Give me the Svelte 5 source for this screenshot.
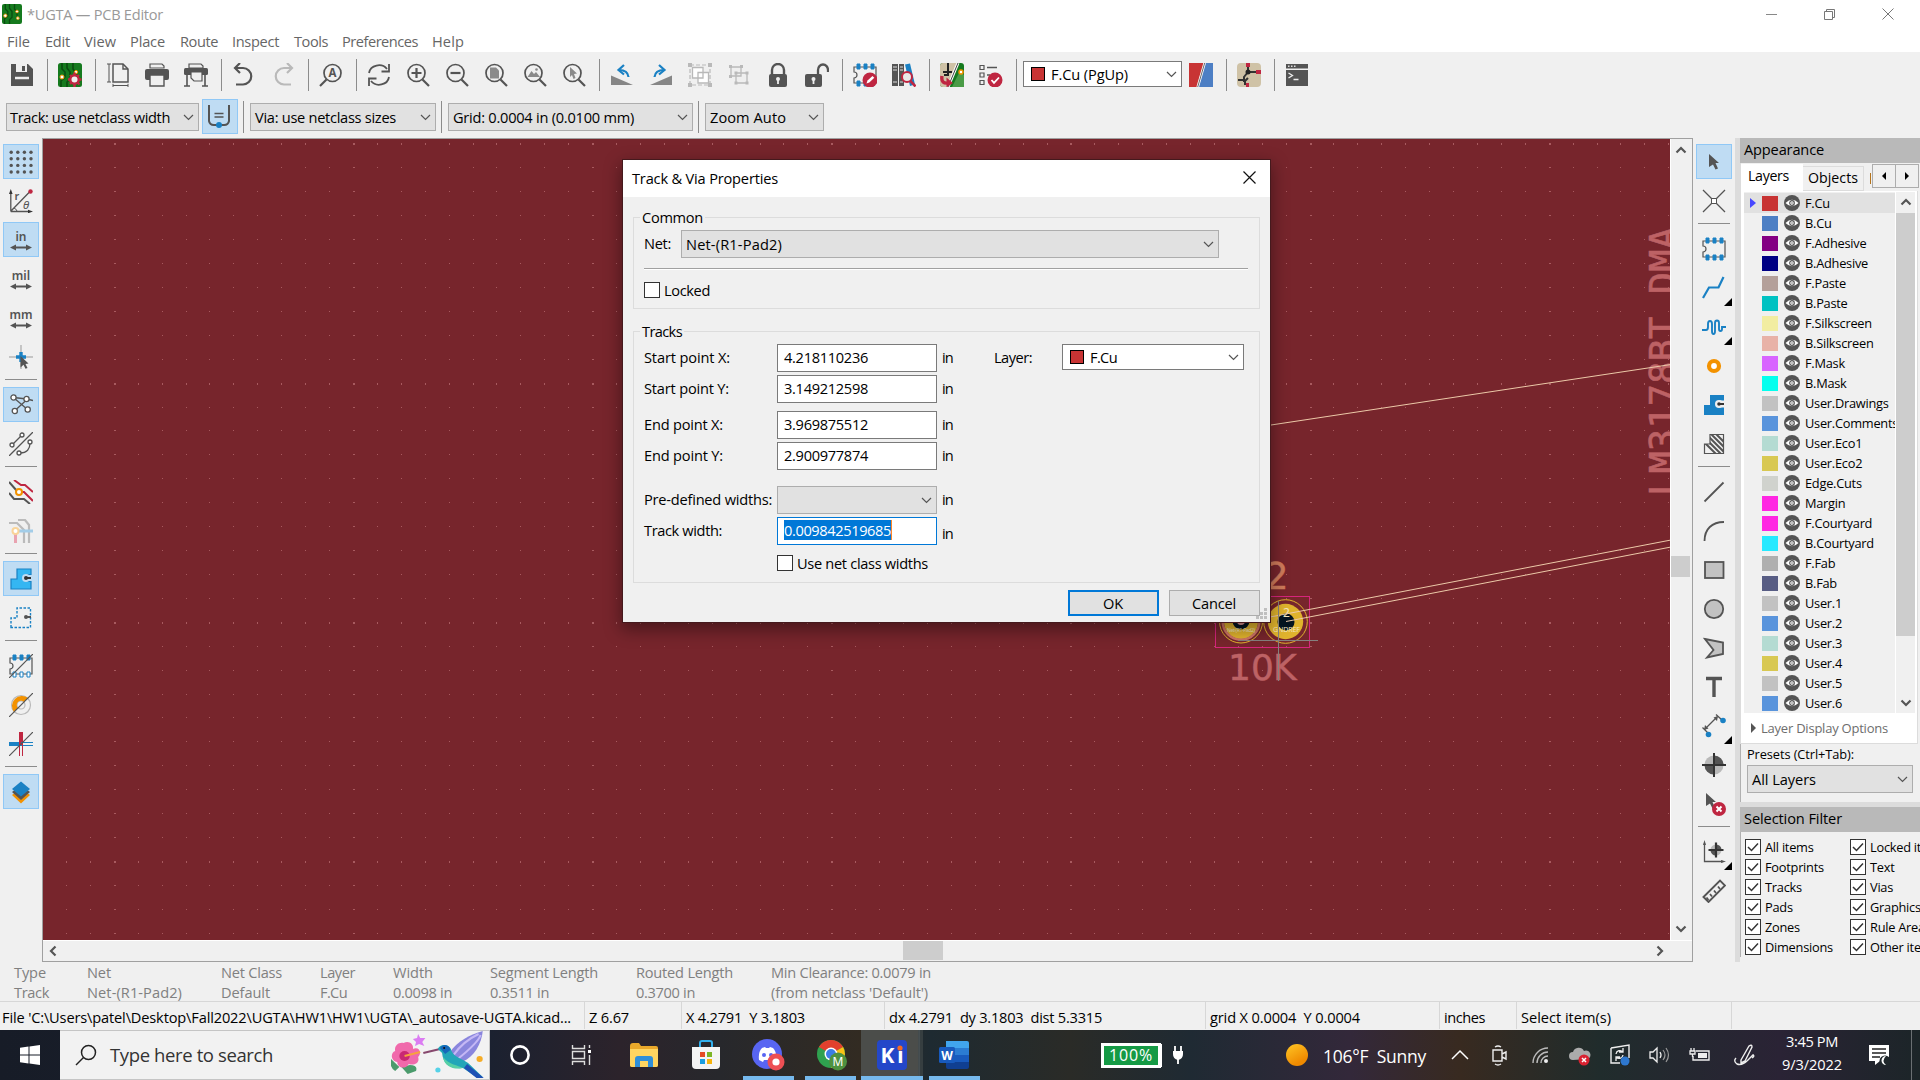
<script>
  // Spreads or tightens letters so that a label takes the given width in pixels.
  function fit(node, width) {
    if (!width) return;
    const natural = node.getBoundingClientRect().width;
    node.style.letterSpacing = (width - natural) / node.textContent.length + 'px';
  }

  const D = '#545454', B = '#1a81c4', R = '#bf2641', O = '#f39200', G = '#b9b9b9';
  const lens = (inner, c = D) => `<circle cx="10.5" cy="10" r="8.5" fill="none" stroke="${c}" stroke-width="1.7"/><path d="M16.5 16.5L23 23" stroke="${c}" stroke-width="2.2"/>${inner}`;
  const board = '<rect x="0" y="0" width="24" height="24" rx="2.5" fill="#157a1e"/><path d="M4 0v6l3 3v5l-4 4v6M9 0v5l3 4v7l-3 3v5M15 0v6l3 4v4" fill="none" stroke="#0a4d10" stroke-width="1.6"/>';
  const chip = (fill) => `<path d="M1 4H23V20H1V15a3 3 0 000-6z" fill="none" stroke="${D}" stroke-width="1.2"/><g fill="${B}" stroke="${B}"><path d="M4 1h3v5H4zM11 1h3v5h-3zM18 1h3v5h-3z"/><path fill="${fill}" d="M4 18h3v5H4zM11 18h3v5h-3zM18 18h3v5h-3z"/></g>`;
  const unit = '<path d="M4 19.5H20" stroke="#545454" stroke-width="2"/><path d="M1 19.5l6-3v6zM23 19.5l-6-3v6z" fill="#545454"/>';
  const word = (s, x = 12) => `<text x="${x}" y="12.6" text-anchor="middle" font-family="Noto Sans" font-weight="600" font-size="12" fill="${D}">${s}</text>`;
  const zone = (fill, extra) => `<path d="M2 22V12H8V2H22V7.5H18a3.5 3.5 0 000 7H22V22z" fill="${fill}" ${extra}/>`;
  const cursor = (x, y) => `<path transform="translate(${x} ${y})" d="M0 0L10 9H6.5L9 14.5 6.5 15.5 4 10.5 0 13z" fill="${D}"/>`;

  const icons = {
    save: `<path d="M1 1H18L23 6V23H1z" fill="${D}"/><path d="M6 1H17V9H6z" fill="#efefef"/><path d="M12 3h3v5h-3z" fill="${D}"/><path d="M5 15H19" stroke="#efefef" stroke-width="2.500"/>`,
    setup: `${board}<circle cx="4" cy="14" r="2" fill="#fff" stroke="${O}"/><circle cx="18" cy="9" r="1.6" fill="#fff" stroke="${O}"/><circle cx="16.5" cy="16.5" r="4.2" fill="#efefef" stroke="${R}" stroke-width="2.4"/><path d="M16.500 9.500V12M16.500 21v3M10 16.500h2.400M20.800 16.500H23.500M12 12l2 2M19.500 19.500l2 2M21 12l-2 2M12 21l2-2" stroke="${R}" stroke-width="2.400"/>`,
    page: `<path d="M7 1H17L22 6V19H7z" fill="none" stroke="${D}" stroke-width="1.5"/><path d="M17 1V6H22" fill="none" stroke="${D}" stroke-width="1.4"/><path d="M3 1V19M1 1H5M1 19H5M7 22.5H22M7 20.8V24M22 20.8V24" stroke="${D}"/>`,
    print: `<path d="M5 1H17L19 3V5H5z" fill="#efefef" stroke="${D}" stroke-width="1.2"/><rect x="0" y="6" width="24" height="11" rx="2" fill="${D}"/><path d="M5 12H19V23H5z" fill="#efefef" stroke="${D}" stroke-width="1.4"/>`,
    plot: `<path d="M5 1H17L19 3V5H5z" fill="#efefef" stroke="${D}" stroke-width="1.2"/><rect x="0" y="5" width="24" height="7" rx="1.5" fill="${D}"/><path d="M3 12V23M21 12V23M0 23H6M18 23H24" stroke="${D}" stroke-width="1.6"/><path d="M7 9H18V18H10L7 15z" fill="#efefef" stroke="${D}" stroke-width="1.2"/>`,
    undo: `<path d="M4 5H11A8 8 0 1111 21.5H4" fill="none" stroke="${D}" stroke-width="2.2"/><path d="M8 0L3 5 8 10" fill="none" stroke="${D}" stroke-width="2.2"/>`,
    redo: `<path d="M21 5H13A8 8 0 1013 21.5H20" fill="none" stroke="${G}" stroke-width="2.2"/><path d="M16 0L21 5 16 10" fill="none" stroke="${G}" stroke-width="2.2"/>`,
    find: `<g transform="translate(24 0) scale(-1 1)">${lens('')}</g><text x="13.5" y="14" text-anchor="middle" font-family="Noto Sans" font-weight="700" font-size="11.5" fill="${D}">A</text>`,
    refresh: `<path d="M2 10A10 9 0 0120 6M22 14A10 9 0 014 18" fill="none" stroke="${D}" stroke-width="1.8"/><path d="M22 1V8.500H14.500M2 23V15.500H9.500" fill="none" stroke="${D}" stroke-width="1.8"/>`,
    zoomin: lens(`<path d="M5.500 10h10M10.500 5v10" stroke="${D}" stroke-width="2.200"/>`),
    zoomout: lens(`<path d="M5.500 10h10" stroke="${D}" stroke-width="2.200"/>`),
    zoomfit: lens(`<path d="M6 4.500h6l3 3v8H6z" fill="#8a8a8a"/>`),
    zoomobj: lens(`<path d="M4.500 14l4-6 2.500 3 2-2 4 5z" fill="#8a8a8a"/><circle cx="13.500" cy="6.500" r="1.300" fill="#8a8a8a"/>`),
    zoomsel: lens(`<path d="M8 4l7 6.500-3 .5 1.500 4-2 1-1.500-4-2 2z" fill="#8a8a8a"/>`),
    rotl: `<path d="M1 22V12.500L23 22z" fill="#868686"/><path d="M9 7c5 0 9 2 9.500 7" fill="none" stroke="${B}" stroke-width="2.200"/><path d="M14 2L8.500 7 14 11.500" fill="none" stroke="${B}" stroke-width="2.200"/>`,
    rotr: `<path d="M23 22V12.500L1 22z" fill="#868686"/><path d="M15 7c-5 0-9 2-9.500 7" fill="none" stroke="${B}" stroke-width="2.200"/><path d="M10 2l5.500 5L10 11.500" fill="none" stroke="${B}" stroke-width="2.200"/>`,
    group: `<path d="M2 2H22V22H2z" fill="none" stroke="${G}" stroke-width="1.200" stroke-dasharray="4 2"/><path d="M0 0h4v4H0zM20 0h4v4h-4zM0 20h4v4H0zM20 20h4v4h-4z" fill="${G}"/><path d="M4.500 4.500H15V15H4.500zM10 9.500H20.500V20H10z" fill="#fff" stroke="${G}" stroke-width="1.300"/>`,
    ungroup: `<path d="M4 4H14V13H4zM9 10H20V20H9z" fill="#efefef" stroke="${G}" stroke-width="1.300"/><path d="M2 2h3v3H2zM13 2h3v3h-3zM2 12h3v3H2zM7.500 8.500h3v3h-3zM18.500 8.500h3v3h-3zM7.500 18.500h3v3h-3zM18.500 18.500h3v3h-3z" fill="${G}"/>`,
    lock: `<path d="M6 12V7a6 6 0 0112 0v5" fill="none" stroke="${D}" stroke-width="2.400"/><rect x="3" y="11" width="18" height="13" rx="2" fill="${D}"/><circle cx="12" cy="16" r="2" fill="#efefef"/><path d="M12 16v5" stroke="#efefef" stroke-width="1.800"/>`,
    unlock: `<path d="M13 12V7a5 5.500 0 0110 0v2" fill="none" stroke="${D}" stroke-width="2.300"/><rect x="0" y="11" width="17" height="13" rx="2" fill="${D}"/><circle cx="8.500" cy="16" r="2" fill="#efefef"/><path d="M8.500 16v5" stroke="#efefef" stroke-width="1.800"/>`,
    fpedit: `${chip(B)}<circle cx="17" cy="17" r="7.500" fill="${R}"/><path d="M13.500 20.500l1-3 5-4.500 1.800 1.800-5 4.700z" fill="#fff"/>`,
    library: `<path d="M0 1h6v22H0zM7 1h5v22H7z" fill="${D}"/><path d="M13 1.500l5-1 5 21-5 1.500z" fill="${B}"/><path d="M1 4h4M1 7h4M8 4h3M8 7h3M1 19h4M8 19h3" stroke="#ddd"/><circle cx="15" cy="14" r="5" fill="#e8e8e8" stroke="${R}" stroke-width="2"/><path d="M18.500 18l5 5.500" stroke="${R}" stroke-width="2.600"/>`,
    update: `<rect width="24" height="24" rx="3" fill="#157a1e"/><path d="M12 24L20 8 24 12V24z" fill="#4a9b46"/><path d="M3 0H17L8 24H3a3 3 0 01-3-3V3a3 3 0 013-3z" fill="#cfc2a6"/><path d="M8 0v7M3 9h9M8 12H4M8 7v6" stroke="#222" stroke-width="2"/><path d="M18 0L8 24" stroke="#fff" stroke-width="3"/><path d="M18 0L8 24" stroke="#444"/><circle cx="21" cy="9" r="2" fill="#fff" stroke="${O}" stroke-width="1.500"/><path d="M2 13c-1 6 2 7.500 6 7" stroke="${R}" stroke-width="3.400" fill="none"/><path d="M6.500 14.500l6.500 5.500-6.500 4.500z" fill="${R}"/>`,
    drc: `<path d="M1 2.500h4v4H1zM1 10h4v4H1zM1 17.500h4v4H1z" fill="none" stroke="${D}" stroke-width="1.200"/><path d="M8 4.500h10M8 12h3" stroke="${D}" stroke-width="1.500"/><circle cx="16" cy="17" r="7.500" fill="${R}"/><path d="M12.500 17l2.500 2.800 5-5.300" fill="none" stroke="#fff" stroke-width="1.800"/>`,
    pair: `<path d="M0 0H15.500L8.500 24H0z" fill="#c83434"/><path d="M16 0H24V24H9z" fill="#4d7fc4"/><path d="M15.700 0L8.700 24" stroke="#fff" stroke-width="2.600"/><path d="M15.700 0L8.700 24" stroke="#444" stroke-width=".8"/>`,
    router: `<rect width="24" height="24" rx="4" fill="#cfc2a6"/><path d="M11 3v6l-4 5v5M11 9h9M7 17H1M11 15l-3 3v4" stroke="#333" stroke-width="2" fill="none"/><path d="M9 0h4v4H9zM19 7h5v4h-5zM9 20h3v4H9z" fill="${R}"/><circle cx="11" cy="9" r="2.500" fill="#222"/>`,
    console: `<path d="M1 1H23V5.500H1zM1 7H23V23H1z" fill="${D}"/><path d="M3 3.200h1.500M6 3.200h1.500M9 3.200h1.500" stroke="#ddd" stroke-width="1.500"/><path d="M3.500 10l4 2.500-4 2.500M8.500 16.500h5" stroke="#eee" stroke-width="1.300" fill="none"/>`,
    via: `<path d="M2 1V17a5 5 0 005 4H17a5 5 0 005-4V1" fill="none" stroke="${D}" stroke-width="2"/><path d="M7.500 9.500h9M7.500 13h9" stroke="${D}" stroke-width="1.400"/><circle cx="12" cy="21" r="3" fill="${B}"/>`,
    grid: `<g fill="${D}">${[2.2, 8.800, 15.400, 22].map((y) => [2.200, 8.800, 15.400, 22].map((x) => `<circle cx="${x}" cy="${y}" r="1.700"/>`).join('')).join('')}</g>`,
    polar: `<path d="M1.800 22.500V3M1.800 22.500H20M2 22L21 2.500" fill="none" stroke="${D}" stroke-width="1.300"/><path d="M1.800 0L0 5h3.600zM24 22.500l-5-1.800v3.600z" fill="#333"/><circle cx="21.500" cy="2.500" r="2.200" fill="${R}"/><path d="M5 19a5 5 0 013 3" fill="none" stroke="${D}"/><text x="5.500" y="10.500" font-family="Noto Sans" font-size="11" font-weight="600" fill="${D}">r</text><text x="14" y="19.500" font-family="Noto Sans" font-size="11.500" font-style="italic" fill="${D}">θ</text>`,
    inch: word('in') + unit,
    mil: word('mil') + unit,
    mm: word('mm') + unit,
    cross: `<path d="M12 0V24M0 12H24" stroke="#999"/><path d="M12 7V17M7 12H17" stroke="${B}" stroke-width="3.400"/><path d="M11.500 11l8 7.500-3 .5 2 4-2 .8-2-4-3 2.700z" fill="${D}"/>`,
    rats: `<path d="M4.500 4.500L18 6l6 1.500M5.500 18L18 6.500M5 5L18.500 16.500" fill="none" stroke="${D}" stroke-width="1.300"/><g fill="#fff" stroke="${D}" stroke-width="1.300"><circle cx="4.500" cy="4.500" r="2.600"/><circle cx="17.500" cy="6" r="2.600"/><circle cx="5.800" cy="18" r="2.600"/><circle cx="18.700" cy="16.500" r="2.600"/></g>`,
    curved: `<path d="M0 24L24 0M4 12L12 4M11 21c7 0 10-4 10-10" fill="none" stroke="${D}" stroke-width="1.300"/><g fill="#fff" stroke="${D}" stroke-width="1.300"><circle cx="3" cy="13" r="2"/><circle cx="13" cy="3" r="2"/><circle cx="10" cy="21" r="2"/><circle cx="21" cy="10" r="2"/></g>`,
    tracks: `<g fill="none" stroke-width="2"><path d="M5 0l7 5h4l8 7M10 12h5l9 9" stroke="${R}"/><path d="M0 2l8 9M0 13l5 6h10l6 5" stroke="${D}"/></g><circle cx="10" cy="12" r="3" fill="#fff" stroke="${O}" stroke-width="2"/>`,
    nets: `<g fill="none" stroke-width="2.200"><path d="M0 4h8l7 7v13M9 1h7l4 5v18" stroke="#bbb"/><path d="M6 12h18" stroke="#a3cde8" stroke-width="3"/><path d="M6.500 12v12" stroke="#e9a3b0" stroke-width="3"/></g><circle cx="6.500" cy="12" r="3" fill="#fff" stroke="#f9d499" stroke-width="2"/>`,
    zone: `${zone('#34b6f2', `stroke="${B}" stroke-width="1.200"`)}<circle cx="17" cy="11" r="4" fill="#bfdcf3"/><path d="M16 11h6" stroke="#333" stroke-width="2"/><circle cx="17" cy="11" r="2" fill="#333"/>`,
    zoneout: `<path d="M2 21.500V12H8V2H21.500V21.500z" fill="none" stroke="${B}" stroke-width="1.400" stroke-dasharray="2.500 1.500"/><path d="M16 11h6" stroke="${D}" stroke-width="2"/><circle cx="17" cy="11" r="2" fill="${D}"/>`,
    fpout: `${chip('#fff')}<path d="M0 24L24 0" stroke="${D}" stroke-width="1.200"/>`,
    padout: `<circle cx="12" cy="12" r="9.500" fill="none" stroke="${G}" stroke-width="1.200"/><circle cx="12" cy="12" r="4" fill="none" stroke="${G}" stroke-width="1.200"/><path d="M5 19A10 10 0 0119 5L15 9a4.200 4.200 0 00-6 6z" fill="${O}"/><path d="M0 24L24 0" stroke="${D}" stroke-width="1.200"/>`,
    trkout: `<path d="M0 12h12" stroke="${B}" stroke-width="4"/><path d="M12 0v13" stroke="${R}" stroke-width="4"/><path d="M12 10.500h12M12 13.500h12" stroke="${B}"/><path d="M10.500 13v11M13.500 13v11" stroke="${R}"/><path d="M0 24L24 0" stroke="${D}" stroke-width="1.200"/>`,
    layers: `<path d="M12 8L21 15 12 23.500 3 15z" fill="${O}"/><path d="M12 5L21 12 12 20 3 12z" fill="${D}"/><path d="M12 1.500L21 9 12 16.500 3 9z" fill="${B}"/>`,
    select: cursor(7, 4),
    local: `<path d="M1 1L10 10M23 1L14 10M1 23L10 14M23 23L14 14" stroke="${D}" stroke-width="1.300"/><rect x="9.500" y="9.500" width="5" height="5" fill="#fff" stroke="${D}"/>`,
    chip: chip(B),
    route: `<path d="M1 22l6-10.500h9.500L21.500 1" fill="none" stroke="${B}" stroke-width="2.200"/>`,
    tune: `<path d="M0 15h4q2 0 2-3V9q0-3 2-3t2 3v7q0 3 1.500 3t1.500-3V8q0-2.500 2-2.500T17 8v6q0 2 1.500 2T20 14v-2h4" fill="none" stroke="${B}" stroke-width="1.900"/>`,
    viaring: `<circle cx="12" cy="12" r="5" fill="#fff" stroke="${O}" stroke-width="4.200"/>`,
    addzone: `${zone(B, '')}<circle cx="17" cy="11" r="4" fill="#efefef"/><path d="M16 11h6" stroke="#333" stroke-width="2"/><circle cx="17" cy="11" r="1.800" fill="#333"/>`,
    hatch: `<defs><clipPath id="hc"><path d="M2 22V12H8V2H22V22z"/></clipPath></defs><path clip-path="url(#hc)" d="M-8 0l24 24M-3 0l24 24M2 0l24 24M7 0l24 24M12 0l24 24" stroke="${D}" stroke-width="2"/><path d="M2.500 21.500V12H8V2.500H21.500V21.500z" fill="none" stroke="${D}" stroke-width="1.200"/>`,
    line: `<path d="M2.500 21.500L21.500 2.500" stroke="${D}" stroke-width="1.800"/>`,
    arc: `<path d="M2.500 22C2.500 10 10 3 22 3" fill="none" stroke="${D}" stroke-width="1.800"/>`,
    rect: `<rect x="3" y="4" width="18.500" height="16" fill="#c2c2c2" stroke="${D}" stroke-width="1.800"/>`,
    circle: `<circle cx="12" cy="12" r="9.200" fill="#c2c2c2" stroke="${D}" stroke-width="1.800"/>`,
    poly: `<path d="M3 3L21 6.500V18L5 21.500 11.500 14z" fill="#c2c2c2" stroke="${D}" stroke-width="1.800"/>`,
    text: `<path d="M4 3.500H20M12 3.500V22" stroke="${D}" stroke-width="3.400"/>`,
    dim: `<path d="M3 15L15 3M0.500 13.500L7 20M14 0.500L20 6" stroke="${D}" stroke-width="1.300"/><path d="M2 16l1-5 3.500 3.500zM16 2l-1 5-3.500-3.500z" fill="${D}"/><circle cx="6.500" cy="20.500" r="2.800" fill="${B}"/><circle cx="21" cy="6.500" r="2.800" fill="${B}"/>`,
    origin: `<circle cx="12" cy="12" r="9.500" fill="${G}"/><path d="M12 12V2.500A9.500 9.500 0 0121.500 12zM12 12V21.500A9.500 9.500 0 012.500 12z" fill="${D}"/><path d="M12 0V24M0 12H24" stroke="#333" stroke-width="2"/>`,
    del: `${cursor(4, 1)}<circle cx="17" cy="17" r="7" fill="${R}"/><path d="M14.500 14.500l5 5M19.500 14.500l-5 5" stroke="#fff" stroke-width="2"/>`,
    gridorigin: `<path d="M2.500 3V21.500H21" fill="none" stroke="${D}" stroke-width="1.300"/><path d="M2.500 0L1 5h3zM24 21.500l-5-1.500v3z" fill="${D}"/><circle cx="14" cy="10" r="5.500" fill="${G}"/><path d="M14 10V4.500a5.500 5.500 0 015.500 5.500zM14 10v5.500A5.500 5.500 0 018.500 10z" fill="${D}"/><path d="M14 2.500V17.500M6.500 10H21.500" stroke="#333" stroke-width="2.200"/>`,
    ruler: `<path d="M1.500 18L18 1.500l5 5L6.500 23z" fill="none" stroke="${D}" stroke-width="1.900"/><path d="M6.500 21l-2-2.500M10 17.500l-2-2.500M14 14l-2-2.500M18 10l-2-2.500" stroke="${D}" stroke-width="1.800"/>`
  };
  const boardIcon = board + `<circle cx="4" cy="14" r="2" fill="#fff" stroke="${O}"/><circle cx="18" cy="9" r="1.600" fill="#fff" stroke="${O}"/><circle cx="19" cy="17" r="1.600" fill="#fff" stroke="${O}"/>`;

  const toolbarA = ['save', '|', 'setup', '|', 'page', 'print', 'plot', '|', 'undo', 'redo', '|', 'find', '|', 'refresh', 'zoomin', 'zoomout', 'zoomfit', 'zoomobj', 'zoomsel', '|', 'rotl', 'rotr', 'group', 'ungroup', 'lock', 'unlock', '|', 'fpedit', 'library', '|', 'update', 'drc', '|'];
  const leftTools = ['grid*', 'polar', 'inch*', 'mil', 'mm', 'cross', '|', 'rats*', 'curved', '|', 'tracks', 'nets', '|', 'zone*', 'zoneout', '|', 'fpout', 'padout', 'trkout', '|', 'layers*'];
  const rightTools = ['select*', 'local', '|', 'chip', 'route+', 'tune+', 'viaring', 'addzone', 'hatch', '|', 'line', 'arc', 'rect', 'circle', 'poly', 'text', 'dim+', 'origin', 'del', '|', 'gridorigin+', 'ruler'];

  const menus = [['File', 23, 15], ['Edit', 25, 14], ['View', 32, 14], ['Place', 35, 15], ['Route', 38, 14], ['Inspect', 47, 15], ['Tools', 34, 14], ['Preferences', 76, 14], ['Help', 32, 0]];

  const layers = [['F.Cu', '#c83434'], ['B.Cu', '#4d7fc4'], ['F.Adhesive', '#840084'], ['B.Adhesive', '#000084'], ['F.Paste', '#b4a09a'], ['B.Paste', '#00c2c2'], ['F.Silkscreen', '#f2eda1'], ['B.Silkscreen', '#e8b2a7'], ['F.Mask', '#d864ff'], ['B.Mask', '#02ffee'], ['User.Drawings', '#c2c2c2'], ['User.Comments', '#5994dc'], ['User.Eco1', '#b4dbd2'], ['User.Eco2', '#d8c852'], ['Edge.Cuts', '#d0d2cd'], ['Margin', '#ff26e2'], ['F.Courtyard', '#ff26e2'], ['B.Courtyard', '#26e9ff'], ['F.Fab', '#afafaf'], ['B.Fab', '#585d84'], ['User.1', '#c2c2c2'], ['User.2', '#5994dc'], ['User.3', '#b4dbd2'], ['User.4', '#d8c852'], ['User.5', '#c2c2c2'], ['User.6', '#5994dc']];

  const filters = [['All items', 'Locked items'], ['Footprints', 'Text'], ['Tracks', 'Vias'], ['Pads', 'Graphics'], ['Zones', 'Rule Areas'], ['Dimensions', 'Other items']];

  const info = [['Type', 'Track', 73, 32, 35], ['Net', 'Net-(R1-Pad2)', 134, 24, 95], ['Net Class', 'Default', 99, 61, 49], ['Layer', 'F.Cu', 73, 35, 27], ['Width', '0.0098 in', 97, 40, 59], ['Segment Length', '0.3511 in', 146, 108, 59], ['Routed Length', '0.3700 in', 135, 97, 59], ['Min Clearance: 0.0079 in', "(from netclass 'Default')", 200, 160, 157]];

  const status = [["File 'C:\\Users\\patel\\Desktop\\Fall2022\\UGTA\\HW1\\HW1\\UGTA\\_autosave-UGTA.kicad...", 569, 585], ['Z 6.67', 40, 97], ['X 4.2791  Y 3.1803', 119, 203], ['dx 4.2791  dy 3.1803  dist 5.3315', 213, 321], ['grid X 0.0004  Y 0.0004', 150, 234], ['inches', 41, 77], ['Select item(s)', 90, 215]];

  // Grid dots; every tenth row and column is heavier.
  let dots = '';
  for (let r = 0; r < 34; r++)
    for (let c = 0; c < 68; c++) {
      const x = Math.round(66 + c * 23.915), y = Math.round(143.400 + r * 23.920);
      dots += `M${x} ${y}h${c % 10 === 2 ? 2 : 1}v${r % 10 === 0 ? 2 : 1}h-${c % 10 === 2 ? 2 : 1}z`;
    }
</script>

{#snippet t(s, w)}<span class="t" use:fit={w}>{s}</span>{/snippet}

{#snippet icon(name)}<svg width="24" height="24" viewBox="0 0 24 24">{@html icons[name]}</svg>{/snippet}

{#snippet chev()}<svg class="chev" width="11" height="7" viewBox="0 0 11 7"><path d="M1 1L5.5 5.500 10 1" fill="none" stroke="#555" stroke-width="1.200" /></svg>{/snippet}

{#snippet arrow(dir)}<svg class="arr {dir}" width="12" height="12" viewBox="0 0 12 12"><path d="M1.500 8.500L6 4l4.500 4.500" fill="none" stroke="#555" stroke-width="2.200" /></svg>{/snippet}

{#snippet tools(list)}
  {#each list as name}
    {#if name === '|'}
      <div class="sep"></div>
    {:else}
      <div class="tool" class:on={name.endsWith('*')}>
        {@render icon(name.replace(/[*+]/, ''))}
        {#if name.endsWith('+')}<i class="corner"></i>{/if}
      </div>
    {/if}
  {/each}
{/snippet}

{#snippet check(label, w)}
  <div class="check"><b class="box"><svg width="14" height="14" viewBox="0 0 14 14"><path d="M2 7l3.500 3.500L12 3.500" fill="none" stroke="#333" stroke-width="1.500" /></svg></b>{@render t(label, w)}</div>
{/snippet}

<div class="screen">
  <header>
    <div class="title">
      <svg width="20" height="20" viewBox="0 0 24 24">{@html boardIcon}</svg>
      {@render t('*UGTA — PCB Editor', 136)}
      <svg class="winbtns" width="130" height="20" viewBox="0 0 130 20"><path d="M1 10.500h11" stroke="#888" /><path d="M59.500 7.500h8v8h-8zM61.500 7.500v-2h8v8h-2" fill="none" stroke="#777" /><path d="M117.500 4.500l11 11M128.500 4.500l-11 11" stroke="#777" /></svg>
    </div>
    <nav>
      {#each menus as [m, w, gap]}
        <span class="menu g{gap}">{@render t(m, w)}</span>
      {/each}
    </nav>
  </header>

  <div class="bar bar1">
    {@render tools(toolbarA)}
    <div class="combo white layercombo"><i class="sw"></i>{@render t('F.Cu (PgUp)', 77)}{@render chev()}</div>
    {@render tools(['pair', '|', 'router', '|', 'console'])}
  </div>
  <div class="bar bar2">
    <div class="combo c1">{@render t('Track: use netclass width', 160)}{@render chev()}</div>
    <div class="viabtn">{@render icon('via')}</div>
    <div class="vsep"></div>
    <div class="combo c2">{@render t('Via: use netclass sizes', 141)}{@render chev()}</div>
    <div class="vsep"></div>
    <div class="combo c3">{@render t('Grid: 0.0004 in (0.0100 mm)', 181)}{@render chev()}</div>
    <div class="vsep"></div>
    <div class="combo c4">{@render t('Zoom Auto', 76)}{@render chev()}</div>
  </div>

  <main>
    <div class="vbar left">{@render tools(leftTools)}</div>
    <div class="work">
      <div class="view">
        <svg class="board" width="1628" height="801" viewBox="43 139 1628 801">
          <rect x="43" y="139" width="1628" height="801" fill="#77252c" />
          <path d={dots} fill="#a85a5f" shape-rendering="crispEdges" />
          <g class="silk">
            <text transform="translate(1676 496) rotate(-90)" font-size="37" textLength="269">LM3178BT DMA</text>
          </g>
          <g class="value"><text x="1228" y="680" font-size="36">1</text><text x="1251" y="680" font-size="36">0</text><text x="1273" y="680" font-size="36">K</text></g>
          <text class="ref" x="1265" y="589" font-size="37">2</text>
          <rect x="1215.500" y="596.500" width="94" height="51" fill="none" stroke="#d6257c" />
          <g fill="none" stroke="#e0b32d">
            <circle cx="1241" cy="621.500" r="21.500" /><circle cx="1285.500" cy="621.500" r="21.800" />
          </g>
          <circle cx="1241" cy="622" r="17" fill="#e0b32d" /><circle cx="1241" cy="621.500" r="18.300" fill="none" stroke="#cf7664" stroke-width="2.500" />
          <circle cx="1241" cy="621" r="8.500" fill="#041420" /><circle cx="1241" cy="621" r="4" fill="#dc9494" />
          <circle cx="1285.500" cy="621.500" r="17.700" fill="#e0b32d" /><circle cx="1286" cy="622" r="8.500" fill="#041420" />
          <g fill="#f3e6c0" font-family="Noto Sans" text-anchor="middle"><text x="1286.500" y="617" font-size="12">2</text><text x="1286.500" y="632" font-size="7" textLength="27">GNDREF</text><text x="1241" y="632" font-size="5" textLength="28">Net-(R1-Pad2)</text></g>
          <path d="M1271 425L1671 364.500M1270 617L1671 540M1286 621.500L1671 547" fill="none" stroke="#ecc9a8" stroke-width="1" />
          <path d="M1278.500 601V681M1238 640.500H1318" stroke="#85817f" />
        </svg>
        <div class="vscroll">{@render arrow('up')}<i></i>{@render arrow('down')}</div>
      </div>
      <div class="hscroll">{@render arrow('lt')}<i></i>{@render arrow('rt')}</div>
    </div>
    <div class="vbar right">{@render tools(rightTools)}</div>
    <aside>
      <div class="head">{@render t('Appearance', 80)}</div>
      <div class="tabs">
        <div class="tab active">{@render t('Layers', 41)}</div>
        <div class="tab">{@render t('Objects', 50)}</div>
        <div class="sliver"></div>
        <div class="tbtn"><svg width="6" height="8" viewBox="0 0 6 8"><path d="M5 0v8L1 4z" /></svg></div>
        <div class="tbtn"><svg width="6" height="8" viewBox="0 0 6 8"><path d="M1 0v8l4-4z" /></svg></div>
      </div>
      <div class="panel">
        <div class="lists">
          <div class="rows">
            {#each layers as [name, color], i}
              <div class="row" class:cur={i === 0}>
                <i class="mark"></i><b style="background:{color}"></b>
                <svg width="16" height="16" viewBox="0 0 16 16"><circle cx="8" cy="8" r="8" fill="#545454" /><path d="M1.500 8Q8 1.500 14.500 8 8 14.500 1.500 8z" fill="#fff" /><circle cx="8" cy="8" r="2.300" fill="#fff" stroke="#545454" stroke-width="1.200" /><circle cx="8" cy="8" r=".7" fill="#545454" /></svg>
                <span class="lname">{name}</span>
              </div>
            {/each}
          </div>
          <div class="lscroll">{@render arrow('up')}<i></i>{@render arrow('down')}</div>
        </div>
        <div class="ldo"><svg width="5" height="10" viewBox="0 0 5 10"><path d="M0 0l5 5-5 5z" fill="#555" /></svg>{@render t('Layer Display Options', 127)}</div>
      </div>
      <div class="presets">
        {@render t('Presets (Ctrl+Tab):', 107)}
        <div class="combo">{@render t('All Layers', 64)}{@render chev()}</div>
      </div>
      <div class="head sel">{@render t('Selection Filter', 98)}</div>
      <div class="filters">
        {#each filters as [a, b]}
          {@render check(a)}{@render check(b)}
        {/each}
      </div>
    </aside>
  </main>

  <section class="info">
    {#each info as [a, b, w, wa, wb]}
      <div style="width:{w}px">{@render t(a, wa)}{@render t(b, wb)}</div>
    {/each}
  </section>
  <section class="status">
    {#each status as [s, w, cell]}
      <div style="width:{cell}px">{@render t(s, w)}</div>
    {/each}
  </section>

  <footer>
    <div class="start"><svg width="20" height="20" viewBox="0 0 20 20"><path d="M0 2.800L8.500 1.600V9.500H0zM9.500 1.400L20 0V9.500H9.500zM0 10.500H8.500V18.400L0 17.200zM9.500 10.500H20V20L9.500 18.600z" fill="#fff" /></svg></div>
    <div class="search">
      <svg width="22" height="22" viewBox="0 0 22 22"><circle cx="13.500" cy="8.500" r="7" fill="none" stroke="#222" stroke-width="1.500" /><path d="M8.500 13.500L1 21" stroke="#222" stroke-width="1.500" /></svg>
      {@render t('Type here to search', 163)}
      <svg class="bird" width="98" height="48" viewBox="2 0 94 48" preserveAspectRatio="none">
        <path d="M6 40q-6-4-4-12l8 8zM20 34q8 0 6 6l-8 3-6-7z" fill="#4b9b6c" />
        <path d="M14 12c6-3 10 2 9 6 6-3 9 4 5 8 2 6-4 9-9 7-3 6-11 4-11-2-6-1-7-9-2-11-1-5 3-9 8-8z" fill="#f069ab" />
        <circle cx="15" cy="25" r="5" fill="#c92873" /><path d="M15 25l15-4" stroke="#f7a13d" stroke-width="2" />
        <path d="M28 3l2 4 5 0-3 4 2 4-5-2-4 2 1-4-3-3 4-1z" fill="#db7cf2" />
        <path d="M33 22l16-4" stroke="#87496e" stroke-width="2" />
        <path d="M58 22C66 9 78 4 90 0c-1 12-8 26-20 31z" fill="#8a86dd" /><path d="M66 28C78 18 86 10 88 4M62 24C70 12 80 6 86 3" stroke="#c5b8f5" stroke-width="2" fill="none" />
        <path d="M47 18c2-6 12-5 13 2 4 8 13 8 18 14l12 12-5 1-14-10c-13 1-19-4-20-15z" fill="#22a6b8" /><path d="M49 17c3-5 9-3 10 2l-5 4z" fill="#1668ba" /><path d="M52 26c6 8 14 8 19 11-8 2-18-1-19-11z" fill="#57d0a6" /><path d="M75 33l16 14-7 0-12-10z" fill="#1e50b4" />
        <circle cx="53" cy="17" r="1" fill="#111" /><circle cx="87" cy="28" r="3" fill="#f5ac26" /><circle cx="47" cy="39" r="2.500" fill="#56d2e8" />
      </svg>
    </div>
    <div class="app"><svg width="22" height="22" viewBox="0 0 22 22"><circle cx="11" cy="11" r="8.600" fill="none" stroke="#fff" stroke-width="2.600" /></svg></div>
    <div class="app"><svg width="22" height="22" viewBox="0 0 22 22"><path d="M1.500 1v3.500h12V1M1.500 21v-3.500h12V21M1.500 7.500h12v7h-12zM18.500 1v3M18.500 11v10" fill="none" stroke="#ddd" stroke-width="1.400" /><rect x="17" y="6" width="3" height="3" fill="#fff" /></svg></div>
    <div class="app"><svg width="30" height="26" viewBox="0 0 30 26"><path d="M1 4q0-3 3-3h6l2 3h15q2 0 2 2v17q0 2-2 2H3q-2 0-2-2z" fill="#e9a82a" /><path d="M1 7h28v16q0 2-2 2H3q-2 0-2-2z" fill="#ffd560" /><path d="M6 25V17q0-3 3-3h12q3 0 3 3v8h-5v-6h-8v6z" fill="#2f8fd8" /></svg></div>
    <div class="app"><svg width="30" height="30" viewBox="0 0 30 30"><path d="M9 8V3q0-2 2-2h8q2 0 2 2v5" fill="none" stroke="#31b0ee" stroke-width="2" /><path d="M1 7H29V25q0 4-4 4H5q-4 0-4-4z" fill="#f4f4f4" /><path d="M9 12h5v5H9z" fill="#e44b25" /><path d="M16 12h5v5h-5z" fill="#7cb526" /><path d="M9 19h5v5H9z" fill="#1a9de0" /><path d="M16 19h5v5h-5z" fill="#f7b40c" /></svg></div>
    <div class="app open"><svg width="34" height="34" viewBox="0 0 34 34"><circle cx="16" cy="16" r="15" fill="#5865f2" /><path d="M8 22q-1-8 3-12l3-1 1 1h3l1-1 3 1q4 4 3 12l-4 2-1-2h-7l-1 2z" fill="#fff" /><circle cx="13" cy="17" r="2" fill="#5865f2" /><circle cx="20" cy="17" r="2" fill="#5865f2" /><circle cx="25" cy="24" r="8.500" fill="#ed4f54" /><circle cx="25" cy="24" r="3.600" fill="#fff" /></svg></div>
    <div class="app open"><svg width="34" height="34" viewBox="-3 -1 34 34"><circle cx="15" cy="15" r="14" fill="#2fa14f" /><path d="M15 15L2.900 8A14 14 0 0127.100 8z" fill="#e2402e" /><path d="M15 15L27.100 8A14 14 0 0115 29z" fill="#fbc116" /><path d="M3 8A14 14 0 0127 8H15z" fill="#e2402e" /><circle cx="15" cy="15" r="6.500" fill="#fff" /><circle cx="15" cy="15" r="5" fill="#3c7de6" /><circle cx="22" cy="22.500" r="9" fill="#4f9140" /><text x="22" y="27" text-anchor="middle" font-family="Noto Sans" font-size="12" fill="#fff">M</text></svg></div>
    <div class="app open active"><svg width="30" height="30" viewBox="0 0 30 30"><rect x="0" y="0" width="30" height="30" rx="4" fill="#2447c9" /><text x="3.500" y="23" font-family="Noto Sans" font-weight="700" font-size="21" fill="#fff" textLength="23">Kı</text><circle cx="23" cy="8" r="2.600" fill="#f46a25" /></svg></div>
    <div class="app open word"><svg width="30" height="28" viewBox="0 0 30 28"><path d="M7 0H28q2 0 2 2V7H7z" fill="#41a5ee" /><path d="M7 7H30v7H7z" fill="#2b7cd3" /><path d="M7 14H30v7H7z" fill="#185abd" /><path d="M7 21H30v5q0 2-2 2H9q-2 0-2-2z" fill="#103f91" /><rect x="0" y="6" width="16" height="16" rx="1.500" fill="#185abd" /><text x="8" y="18.500" text-anchor="middle" font-family="Noto Sans" font-weight="700" font-size="12" fill="#fff">W</text></svg></div>
    <div class="battery">{@render t('100%', 44)}</div>
    <svg class="plug" width="12" height="20" viewBox="0 0 12 20"><path d="M3 1v5M9 1v5M6 14v5" stroke="#fff" stroke-width="1.800" /><path d="M1 6h10v3q0 5-5 6-5-1-5-6z" fill="#fff" /></svg>
    <div class="sun"></div>
    <div class="weather">{@render t('106°F  Sunny', 103)}</div>
    <div class="tray">
      <svg width="24" height="24" viewBox="0 0 24 24"><path d="M4 16l8-8 8 8" stroke="#fff" fill="none" stroke-width="1.500" /></svg>
      <svg width="24" height="24" viewBox="0 0 24 24"><path d="M5 7h9v11H5zM14 11l4-2v7l-4-2M7 4q3-2 6 0M7 21q3 2 6 0" stroke="#eee" fill="none" stroke-width="1.400" /></svg>
      <svg width="24" height="24" viewBox="0 0 24 24"><path d="M5 20A15 15 0 0120 5M9 20A11 11 0 0120 9M13 20a7 7 0 017-7" stroke="#bbb" fill="none" stroke-width="1.400" /><circle cx="18" cy="18" r="2" fill="#eee" /></svg>
      <svg width="24" height="24" viewBox="0 0 24 24"><path d="M5 17a4 4 0 010-8 6 6 0 0111-1 4 4 0 014 8z" fill="#ababab" /><circle cx="16" cy="17" r="5.500" fill="#d92231" /><path d="M14 15l4 4M18 15l-4 4" stroke="#fff" stroke-width="1.500" /></svg>
      <svg width="24" height="24" viewBox="0 0 24 24"><path d="M3 5l18-3v13M3 5v15h9" stroke="#eee" fill="none" stroke-width="1.400" /><path d="M8 11a4 4 0 017-2M15 12a4 4 0 01-7 2M15 5v4h-4M8 18v-4h4" stroke="#eee" fill="none" stroke-width="1.300" /><circle cx="17" cy="18" r="4.500" fill="#2e78cf" /></svg>
      <svg width="24" height="24" viewBox="0 0 24 24"><path d="M2 9h3l4-4v14l-4-4H2z" stroke="#eee" fill="none" stroke-width="1.300" /><path d="M12 9q2 3 0 6" stroke="#eee" fill="none" stroke-width="1.300" /><path d="M15 7q4 5 0 10M18 5q5 7 0 14" stroke="#999" fill="none" stroke-width="1.200" /></svg>
      <svg width="24" height="24" viewBox="0 0 24 24"><path d="M8 8h13v9H5v-4" stroke="#eee" fill="none" stroke-width="1.400" /><path d="M10 10h9v5h-9z" fill="#eee" /><path d="M3 5v3M6 5v3M2 8h5v3H2zM4.500 11v3" stroke="#eee" stroke-width="1.300" fill="none" /></svg>
    </div>
    <svg class="pen" width="24" height="24" viewBox="0 0 24 24"><path d="M8 17L16 3q3-2 3 1L12 18l-4 2zM3 15q-3 3 1 6 5 2 11-4t5-5q2 1-1 3" stroke="#eee" fill="none" stroke-width="1.400" /></svg>
    <div class="clock">{@render t('3:45 PM', 52)}{@render t('9/3/2022', 60)}</div>
    <svg class="note" width="24" height="24" viewBox="0 0 24 24"><path d="M2 2h20v16h-9l-5 4v-4H2z" fill="#fff" /><path d="M5 6h14M5 10h14M5 14h8" stroke="#222" stroke-width="1.500" /><circle cx="18" cy="18" r="5.500" fill="#1f272b" /><path d="M19 13q-5 5 0 9a4.500 4.500 0 010-9z" fill="#fff" /></svg>
    <div class="peek"></div>
  </footer>

  <div class="dialog">
    <div class="dtitle">{@render t('Track & Via Properties', 146)}<svg width="13" height="13" viewBox="0 0 13 13"><path d="M.5 .5l12 12M12.500 .5l-12 12" stroke="#111" stroke-width="1.200" /></svg></div>
    <fieldset class="common">
      <legend>{@render t('Common', 61)}</legend>
      <div class="frow net"><span class="netlabel">{@render t('Net:', 27)}</span><div class="combo">{@render t('Net-(R1-Pad2)', 96)}{@render chev()}</div></div>
      <div class="rule"></div>
      <div class="frow lockrow"><b class="cb"></b>{@render t('Locked', 46)}</div>
    </fieldset>
    <fieldset class="tracks">
      <legend>{@render t('Tracks', 40)}</legend>
      <div class="frow"><label for="sx">{@render t('Start point X:', 86)}</label><div id="sx" class="input">{@render t('4.218110236', 84)}</div><em>{@render t('in', 11)}</em>
        <span class="laylabel">{@render t('Layer:', 38)}</span><div class="combo white laycombo"><i class="sw"></i>{@render t('F.Cu', 27)}{@render chev()}</div></div>
      <div class="frow r2"><label for="sy">{@render t('Start point Y:', 85)}</label><div id="sy" class="input">{@render t('3.149212598', 84)}</div><em>{@render t('in', 11)}</em></div>
      <div class="frow r3"><label for="ex">{@render t('End point X:', 79)}</label><div id="ex" class="input">{@render t('3.969875512', 84)}</div><em>{@render t('in', 11)}</em></div>
      <div class="frow r2"><label for="ey">{@render t('End point Y:', 79)}</label><div id="ey" class="input">{@render t('2.900977874', 84)}</div><em>{@render t('in', 11)}</em></div>
      <div class="frow r5"><label for="pw">{@render t('Pre-defined widths:', 128)}</label><div id="pw" class="combo pw">{@render chev()}</div><em>{@render t('in', 11)}</em></div>
      <div class="frow r2"><label for="tw">{@render t('Track width:', 78)}</label><div id="tw" class="input focus"><mark>{@render t('0.009842519685', 107)}</mark></div><em class="low">{@render t('in', 11)}</em></div>
      <div class="frow r7"><b class="cb"></b>{@render t('Use net class widths', 131)}</div>
    </fieldset>
    <div class="buttons"><div class="btn ok">{@render t('OK', 20)}</div><div class="btn">{@render t('Cancel', 44)}</div></div>
    <svg class="grip" width="12" height="12" viewBox="0 0 12 12"><path d="M8 0h3v3H8zM4 4h3v3H4zM8 4h3v3H8zM0 8h3v3H0zM4 8h3v3H4zM8 8h3v3H8z" fill="#bfbfbf" /></svg>
  </div>
</div>

<style>
  :global(body) { margin: 0; overflow: hidden; }
  .screen { position: relative; width: 1920px; height: 1080px; overflow: hidden; background: #f0f0f0; font: 14.600px/20px 'Open Sans', 'Noto Sans', sans-serif; color: #000; display: flex; flex-direction: column; }
  .screen :global(svg) { display: block; flex: none; }
  .t { white-space: pre; flex: none; }
  i, em { font-style: normal; display: block; }
  b { display: block; font-weight: 400; }

  header { background: #fff; height: 52px; color: #666; }
  .title { display: flex; align-items: center; height: 28px; padding-left: 2px; gap: 5px; color: #999; }
  .winbtns { margin-left: auto; margin-right: 25px; }
  nav { display: flex; height: 24px; padding: 3px 0 0 7px; box-sizing: border-box; }
  .g15 { margin-right: 15px; }
  .g14 { margin-right: 14px; }

  .bar { display: flex; align-items: center; }
  .bar1 { height: 46px; padding-left: 2px; }
  .bar2 { height: 40px; padding-left: 6px; align-items: flex-start; padding-top: 5px; box-sizing: border-box; }
  .tool { display: flex; align-items: center; justify-content: center; flex: none; box-sizing: border-box; }
  .bar .tool { width: 39px; height: 39px; }
  .bar .sep { width: 1px; height: 32px; margin: 0 2px 0 6px; background: #8c8c8c; flex: none; }
  .combo { box-sizing: border-box; display: flex; align-items: center; height: 28px; border: 1px solid #adadad; background: #e1e1e1; padding: 0 4px; overflow: hidden; flex: none; }
  .combo.white { background: #fff; border-color: #7a7a7a; }
  .combo :global(.chev) { margin-left: auto; }
  .sw { width: 12px; height: 12px; border: 1px solid #000; background: #c83434; margin-right: 6px; flex: none; }
  .layercombo { width: 159px; height: 26px; margin: -2px -1px 0 4px; padding-left: 7px; }
  .c1 { width: 193px; padding-left: 3px; }
  .c2 { width: 186px; }
  .c3 { width: 245px; }
  .c4 { width: 119px; }
  .viabtn { width: 34px; height: 33px; margin: -4px 5px 0 3px; border: 1px solid #90c8f6; background: #bfdcf3; display: flex; align-items: center; justify-content: center; }
  .viabtn :global(svg) { margin: 0 2px 2px 0; }
  .vsep { width: 1px; height: 32px; margin: -2px 6px 0 5px; background: #8c8c8c; }
  .viabtn + .vsep { margin-left: 0; }

  main { display: flex; height: 824px; }
  .vbar { display: flex; flex-direction: column; align-items: center; padding-top: 6px; height: 818px; flex: none; }
  .vbar.left { width: 42px; }
  .vbar.right { width: 42px; }
  .vbar .tool { width: 36px; height: 35px; margin: 0 0 4px; position: relative; border: 1px solid transparent; }
  .vbar .tool.on { background: #bfdcf3; border-color: #90c8f6; }
  .vbar .sep { width: 32px; height: 1px; margin: 1px 0 7px; background: #8c8c8c; flex: none; }
  .corner { position: absolute; right: -1px; bottom: -2px; border: 4px solid #000; border-top-color: transparent; border-left-color: transparent; }
  .work { width: 1649px; border: 1px solid #a0a0a0; flex: none; height: 822px; }
  .view { display: flex; height: 801px; }
  .silk text { font-family: 'DejaVu Sans Mono', monospace; fill: #bd6265; stroke: #bd6265; stroke-width: 0.600; }
  .value text { font-family: 'DejaVu Sans', sans-serif; fill: #bd6265; stroke: #bd6265; stroke-width: 0.500; }
  .ref { font-family: 'DejaVu Sans', sans-serif; fill: #cf7b5b; stroke: #cf7b5b; stroke-width: 0.500; }
  .vscroll { width: 19px; box-shadow: -1px 0 #fff; display: flex; flex-direction: column; align-items: center; justify-content: space-between; padding: 5px 0; box-sizing: border-box; }
  .vscroll i { width: 19px; height: 21px; background: #cdcdcd; margin-top: 53px; }
  .hscroll { height: 21px; display: flex; align-items: center; justify-content: space-between; padding: 0 26px 0 4px; box-sizing: border-box; box-shadow: inset 0 1px #fff; }
  .hscroll i { width: 40px; height: 19px; background: #cdcdcd; margin-left: 133px; }
  .down { transform: rotate(180deg); }
  .lt { transform: rotate(-90deg); }
  .rt { transform: rotate(90deg); }

  aside { width: 180px; border-left: 5px solid #dcdcdc; flex: none; overflow: hidden; }
  .head { height: 25px; background: #b9b9b9; padding-left: 4px; line-height: 22px; }
  .tabs { display: flex; height: 28px; align-items: flex-end; border-left: 1px solid #dcdcdc; }
  .tab { box-sizing: border-box; width: 61px; height: 25px; border: 1px solid #dcdcdc; border-left: 0; padding: 1px 0 0 5px; font-size: 14.200px; }
  .tab.active { width: 62px; height: 27px; background: #fff; border: 0; padding: 2px 0 0 7px; }
  .sliver { width: 1px; height: 11px; background: #b5741c; margin: 0 1px 7px 6px; }
  .tbtn { width: 22px; height: 22px; border: 1px solid #adadad; display: flex; align-items: center; justify-content: center; margin: 0 -1px 3px 0; background: #f0f0f0; flex: none; }
  .panel { background: #fff; border: 1px solid #dcdcdc; border-top: 0; width: 176px; height: 552px; box-sizing: content-box; }
  .lists { display: flex; padding: 1px 2px 0 3px; height: 521px; }
  .rows { width: 151px; background: #f0f0f0; height: 521px; overflow: hidden; font-size: 12.800px; padding-top: 1px; box-sizing: border-box; }
  .row { height: 20px; display: flex; align-items: center; }
  .row.cur { background: #e1e1e1; }
  .row b { width: 16px; height: 15px; margin-right: 6px; flex: none; }
  .lname { margin-left: 5px; letter-spacing: -0.250px; white-space: nowrap; }
  .mark { width: 18px; height: 10px; flex: none; }
  .cur .mark { box-sizing: border-box; width: 6px; height: 0; margin: 0 6px; border: 5px solid transparent; border-left: 6px solid #4747ff; border-right: 0; }
  .lscroll { width: 19px; background: #f0f0f0; margin-left: 1px; display: flex; flex-direction: column; align-items: center; padding: 4px 0; box-sizing: border-box; }
  .lscroll i { width: 19px; height: 423px; background: #cdcdcd; margin: 5px 0 61px; }
  .ldo { height: 30px; display: flex; align-items: center; gap: 5px; padding-left: 10px; font-size: 13px; color: #6d6d6d; }
  .presets { height: 58px; border-left: 1px solid #b0b0b0; padding: 0 0 0 6px; font-size: 12.800px; line-height: 20px; }
  .presets .combo { width: 166px; margin-top: 1px; font-size: 14.600px; }
  .head.sel { border-top: 5px solid #dcdcdc; }
  .filters { display: grid; grid-template-columns: 105px 105px; grid-auto-rows: 20px; padding: 5px 0 0 4px; font-size: 12.800px; border-left: 1px solid #b0b0b0; margin-right: -40px; }
  .check { display: flex; align-items: center; gap: 4px; letter-spacing: -0.250px; }
  .box { width: 14px; height: 14px; border: 1px solid #333; background: #fff; }

  .info { height: 40px; display: flex; padding-left: 14px; color: #808080; box-sizing: border-box; border-bottom: 1px solid #d7d7d7; }
  .info div { display: flex; flex-direction: column; align-items: flex-start; flex: none; }
  .status { height: 28px; display: flex; background: #f0f0f0; }
  .status div { flex: none; box-sizing: border-box; padding: 6px 0 0 4px; border-right: 1px solid #d7d7d7; height: 27px; line-height: 19px; }
  .status div:first-child { padding-left: 2px; }

  footer { height: 50px; display: flex; align-items: center; color: #fff; background: linear-gradient(90deg, #171c27 0, #1b2130 490px, #2c232b 620px, #27282c 720px, #322b22 860px, #1e2a31 930px, #2a2b27 1070px, #1f2a33 1190px, #33283a 1350px, #382a20 1460px, #202c2c 1600px, #2a2335 1780px, #1c2528 1920px); }
  .start { width: 60px; display: flex; justify-content: center; flex: none; }
  .search { width: 430px; height: 50px; box-sizing: border-box; background: #f2f2f2; border: 1px solid #c5c5c5; border-left: 0; display: flex; align-items: center; padding-left: 15px; gap: 13px; font-size: 18.500px; color: #333; flex: none; margin-right: -1px; }
  .bird { margin-left: auto; margin-right: 0; }
  .app { position: relative; width: 62px; height: 50px; display: flex; align-items: center; justify-content: center; flex: none; }
  .app.open { background: linear-gradient(#76b9ed, #76b9ed) 50% 100% / 51px 4px no-repeat; }
  .app.active { background: linear-gradient(#76b9ed, #76b9ed) 50% 100% / 62px 4px no-repeat, linear-gradient(90deg, #4b4d4a 57px, #2f3637 57px, #586063 58px, #363e40 59px); }
  .battery { margin-left: 116px; width: 54px; height: 19px; border: 3px solid #fff; background: #159a45; flex: none; display: flex; align-items: center; justify-content: center; font-size: 16px; box-shadow: 2px 0 0 -1px #fff; }
  .plug { margin-left: 11px; }
  .sun { width: 22px; height: 22px; border-radius: 50%; margin-left: 102px; background: linear-gradient(150deg, #ffc726, #ef8a00 75%); }
  .weather { margin-left: 15px; font-size: 17.500px; width: 121px; line-height: 24px; padding-top: 2px; }
  .tray { display: flex; gap: 16px; margin-left: 4px; }
  .pen { margin-left: 21px; }
  .clock { width: 70px; margin-left: 20px; display: flex; flex-direction: column; align-items: center; line-height: 23px; height: 50px; }
  .note { margin-left: 20px; }
  .peek { width: 1px; height: 50px; background: #6a6f72; margin-left: 20px; }

  .dialog { position: absolute; left: 623px; top: 160px; width: 647px; height: 462px; background: #f0f0f0; box-shadow: 0 0 0 1px #45191d, 0 6px 16px 2px rgba(0, 0, 0, 0.380); }
  .dtitle { height: 37px; box-sizing: border-box; background: #fff; display: flex; align-items: center; justify-content: space-between; padding: 0 14px 2px 9px; }
  fieldset { box-sizing: border-box; margin: 0 10px; border: 1px solid #dcdcdc; padding: 0 0 0 10px; min-width: 0; }
  legend { padding: 0 2px; margin-left: -4px; height: 20px; }
  .common { margin-top: 10px; height: 102px; }
  .frow { display: flex; align-items: center; height: 28px; }
  .frow.net { margin-top: 3px; }
  .netlabel { width: 37px; padding-bottom: 2px; }
  .net .combo { width: 538px; }
  .rule { height: 1px; background: #a0a0a0; border-bottom: 1px solid #fff; margin: 10px 11px 0 0; }
  .lockrow { height: 16px; margin-top: 12px; }
  .cb { width: 14px; height: 14px; border: 1px solid #333; background: #fff; margin-right: 4px; }
  .tracks { margin-top: 12px; height: 262px; }
  .tracks .frow:nth-of-type(1) { margin-top: 3px; }
  label { width: 133px; flex: none; padding-bottom: 2px; }
  .input { box-sizing: border-box; width: 160px; height: 28px; border: 1px solid #7a7a7a; background: #fff; padding: 2px 6px; flex: none; }
  .focus { border-color: #0078d7; }
  mark { display: inline-block; height: 20px; background: #0078d7; color: #fff; border-right: 1px solid #ff8728; }
  em { margin-left: 5px; width: 52px; padding-bottom: 2px; }
  .laylabel { width: 68px; padding-bottom: 2px; }
  .laycombo { width: 182px; height: 26px; margin-top: -2px; padding-left: 7px; }
  .frow.r2 { margin-top: 3px; }
  .frow.r3 { margin-top: 8px; }
  .frow.r5 { margin-top: 16px; }
  .pw { width: 160px; }
  em.low { padding: 4px 0 0; }
  .frow.r7 { height: 16px; margin: 10px 0 0 133px; }
  .buttons { display: flex; justify-content: flex-end; gap: 10px; padding: 7px 10px 0 0; }
  .btn { box-sizing: border-box; width: 91px; height: 26px; border: 1px solid #adadad; background: #e1e1e1; display: flex; align-items: center; justify-content: center; padding-right: 1px; }
  .ok { border: 2px solid #0078d7; }
  .grip { position: absolute; right: 2px; bottom: 2px; }
</style>
